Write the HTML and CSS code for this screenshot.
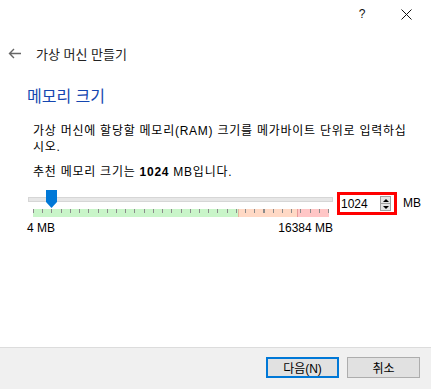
FILE: index.html
```html
<!DOCTYPE html>
<html lang="ko">
<head>
    <meta charset="UTF-8">
    <meta name="viewport" content="width=device-width, initial-scale=1.0">
    <title>가상 머신 만들기</title>
    <link rel="stylesheet" href="styles.css">
</head>
<body>
    <div class="window">
        <div class="titlebar">
            <button class="caption-btn help">?</button>
            <button class="caption-btn close">
                <svg width="11" height="11" viewBox="0 0 11 11" fill="none" stroke="#111" stroke-width="1">
                    <path d="M0.5 0.5 L10.5 10.5 M10.5 0.5 L0.5 10.5"></path>
                </svg>
            </button>
        </div>

        <div class="nav">
            <svg class="back" width="13" height="11" viewBox="0 0 13 11" fill="none" stroke="#666" stroke-width="1.4">
                <path d="M13 5.5 H1.5 M6 1 L1.5 5.5 L6 10"></path>
            </svg>
            <span class="nav-title">가상 머신 만들기</span>
        </div>

        <div class="page">
            <h1>메모리 크기</h1>
            <p class="desc">가상 머신에 할당할 메모리(RAM) 크기를 메가바이트 단위로 입력하십시오.</p>
            <p class="hint">추천 메모리 크기는 <b>1024</b> MB입니다.</p>

            <div class="memory-row">
                <div class="slider">
                    <div class="track">
                        <div class="groove"></div>
                        <svg class="thumb" width="11" height="18" viewBox="0 0 11 18">
                            <path d="M0 0 H11 V12 L5.5 18 L0 12 Z" fill="#0078d7"></path>
                        </svg>
                    </div>
                    <div class="scale"></div>
                    <div class="scale-labels">
                        <span>4 MB</span>
                        <span>16384 MB</span>
                    </div>
                </div>
                <div class="spin-wrap">
                    <div class="spinbox">
                        <span class="spin-value">1024</span>
                        <div class="spin-buttons">
                            <span class="spin-up"></span>
                            <span class="spin-down"></span>
                        </div>
                    </div>
                </div>
                <span class="unit">MB</span>
            </div>
        </div>

        <div class="footer">
            <button class="btn btn-default">다음(N)</button>
            <button class="btn">취소</button>
        </div>
    </div>
</body>
</html>
```

FILE: styles.css
```css
* {
    margin: 0;
    padding: 0;
    box-sizing: border-box;
}

body {
    font-family: "Liberation Sans", "Noto Sans CJK KR", sans-serif;
    font-size: 12px;
    color: #000;
    background: #fff;
}

.window {
    width: 431px;
    height: 389px;
    display: flex;
    flex-direction: column;
}

.titlebar {
    height: 28px;
    display: flex;
    justify-content: flex-end;
    padding-right: 2px;
}

.caption-btn {
    width: 46px;
    height: 28px;
    border: none;
    background: none;
    display: flex;
    align-items: center;
    justify-content: center;
    font-family: "Liberation Sans", sans-serif;
    font-size: 12px;
    color: #111;
}

.help {
    padding-left: 4px;
}

.nav {
    height: 18px;
    margin-top: 16px;
    display: flex;
    align-items: center;
    padding-left: 8px;
    gap: 15px;
}

.nav-title {
    color: #222;
    font-size: 13px;
}

.page {
    flex: 1;
    padding-left: 27px;
}

h1 {
    margin-top: 24px;
    font-size: 16px;
    line-height: 22px;
    font-weight: normal;
    color: #1546b0;
}

.desc {
    margin-top: 15px;
    margin-left: 6px;
    width: 380px;
    line-height: 16px;
    letter-spacing: 0.75px;
}

.hint {
    margin-top: 9px;
    margin-left: 6px;
    line-height: 16px;
    letter-spacing: 0.75px;
}

.hint b {
    font-weight: bold;
}

.memory-row {
    margin-top: 10px;
    display: flex;
    align-items: flex-start;
}

.slider {
    width: 306px;
    padding-left: 1px;
}

.track {
    position: relative;
    height: 19px;
}

.groove {
    position: relative;
    top: 7px;
    height: 5px;
    background: #e7e7e7;
    border: 1px solid #d6d6d6;
}

.thumb {
    position: absolute;
    left: 18px;
    top: 0;
}

.scale {
    margin-left: 5px;
    width: 296px;
    height: 8px;
    background:
        repeating-linear-gradient(to right, #8c8c8c 0 1px, transparent 1px 9.22px) top left / 100% 4px no-repeat,
        linear-gradient(to right, #c9f5c9 0 205px, #e6b79e 205px 206px, #ffd9c5 206px 264px, #e89a9a 264px 265px, #ffc6c6 265px);
}

.scale-labels {
    display: flex;
    justify-content: space-between;
    margin-top: 4px;
    margin-left: -1px;
    line-height: 14px;
}

.spin-wrap {
    margin-left: 4px;
    margin-top: 2px;
    width: 60px;
    height: 23px;
    border: 3px solid #ff0000;
    background: #fff;
}

.spinbox {
    height: 100%;
    display: flex;
    align-items: center;
    justify-content: space-between;
    padding-left: 1px;
    padding-right: 3px;
}

.spin-value {
    font-size: 12px;
}

.spin-buttons {
    width: 11px;
    height: 15px;
    border: 1px solid #a0a0a0;
    background: #e5e5e5;
    display: flex;
    flex-direction: column;
}

.spin-up,
.spin-down {
    flex: 1;
    display: flex;
    align-items: center;
    justify-content: center;
}

.spin-up {
    border-bottom: 1px solid #a0a0a0;
}

.spin-up::after {
    content: "";
    border-left: 3px solid transparent;
    border-right: 3px solid transparent;
    border-bottom: 3px solid #000;
}

.spin-down::after {
    content: "";
    border-left: 3px solid transparent;
    border-right: 3px solid transparent;
    border-top: 3px solid #000;
}

.unit {
    margin-left: 6px;
    margin-top: 6px;
    line-height: 14px;
}

.footer {
    height: 42px;
    border-top: 1px solid #dcdcdc;
    background: #f0f0f0;
    display: flex;
    justify-content: flex-end;
    align-items: flex-start;
    gap: 8px;
    padding: 9px 11px 0 0;
}

.btn {
    width: 73px;
    height: 21px;
    border: 1px solid #adadad;
    background: #e1e1e1;
    font-family: "Liberation Sans", "Noto Sans CJK KR", sans-serif;
    font-size: 12px;
    color: #000;
}

.btn-default {
    border: 2px solid #0078d7;
}
```
